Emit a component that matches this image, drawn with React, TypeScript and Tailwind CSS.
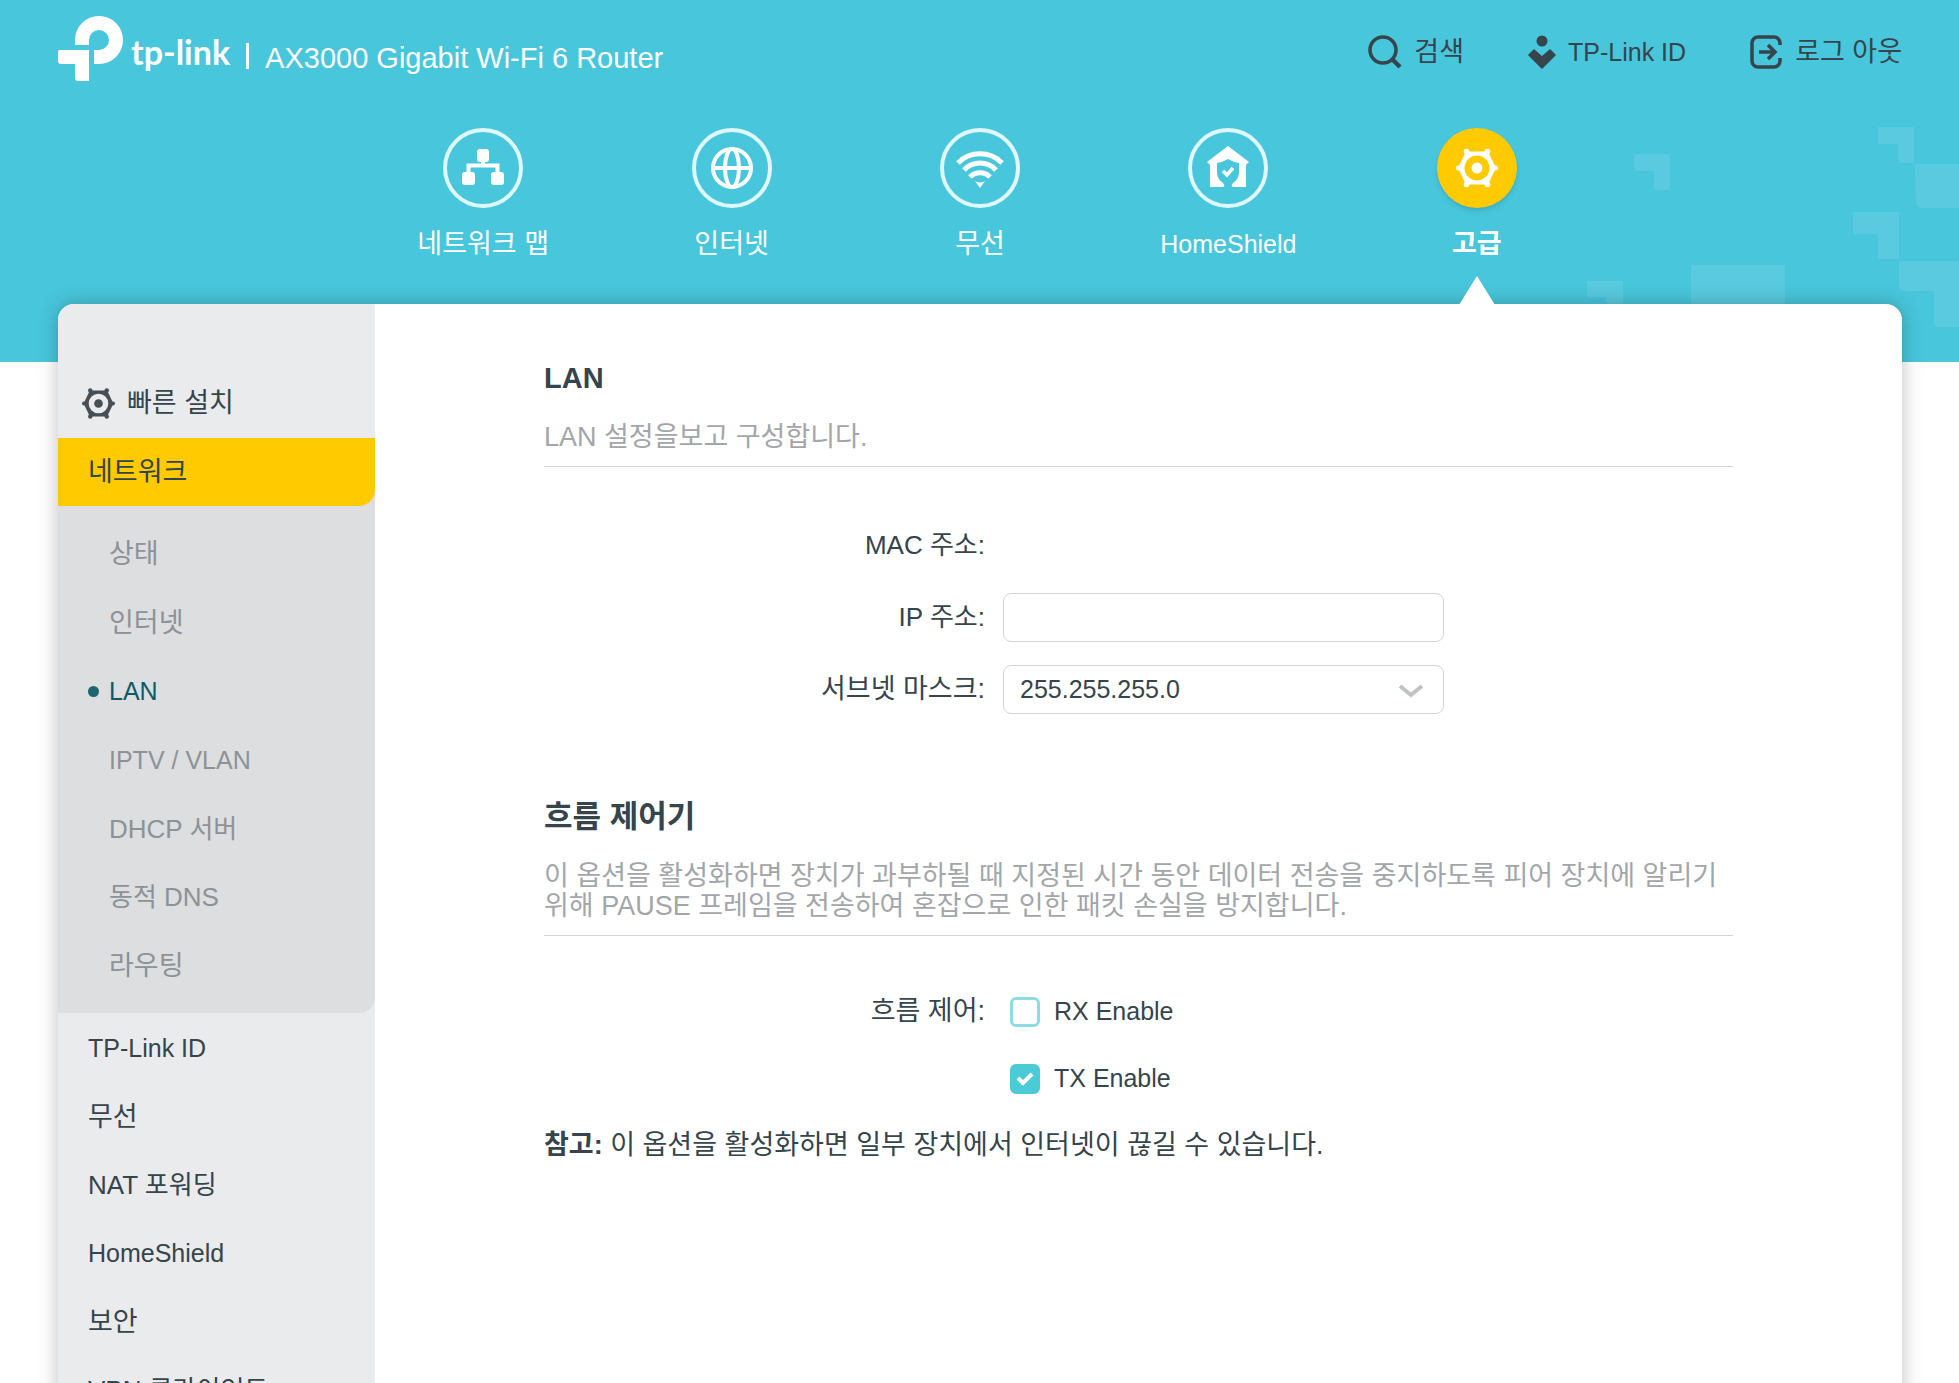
import { ReactNode } from 'react'
import clsx from 'clsx'

const Logo = () => (
  <svg width="65" height="65" viewBox="0 0 65 65" fill="#fff" aria-hidden="true">
    <path d="M17 29V24A24 24 0 1 1 41 48H36V34H41A10 10 0 1 0 31 24V29Z" />
    <path d="M2 34H31V65H20a3 3 0 0 1-3-3V48H3a3 3 0 0 1-3-3V36a2 2 0 0 1 2-2Z" />
  </svg>
)

const SearchIcon = () => (
  <svg width="34" height="34" viewBox="0 0 34 34" fill="none" stroke="#36444b" aria-hidden="true">
    <circle cx="15" cy="15" r="13" strokeWidth="3.5" />
    <path d="M24 24l8 8" strokeWidth="4.5" />
  </svg>
)

const PersonIcon = () => (
  <svg width="28" height="36" viewBox="0 0 28 36" fill="#36444b" aria-hidden="true">
    <circle cx="14" cy="7" r="5.5" />
    <path
      d="M6 16l8 7 8-7 5 5-13 13L1 21Z"
      stroke="#36444b"
      strokeWidth="1.5"
      strokeLinejoin="round"
    />
  </svg>
)

const LogoutIcon = () => (
  <svg width="33" height="34" viewBox="0 0 33 34" fill="none" stroke="#36444b" aria-hidden="true">
    <path
      d="M30 10V8a6 6 0 0 0-6-6H8a6 6 0 0 0-6 6v18a6 6 0 0 0 6 6h16a6 6 0 0 0 6-6v-3"
      strokeWidth="3.5"
    />
    <path d="M9 17h16M18 10l7 7-7 7" strokeWidth="3.5" />
  </svg>
)

const Gear = ({ size, color }: { size: number; color: string }) => (
  <svg width={size} height={size} viewBox="-21 -21 42 42" fill={color} aria-hidden="true">
    <path
      fillRule="evenodd"
      d="M-19 0L-11 -16.5H11L19 0L11 16.5H-11ZM-12.5 0a12.5 12.5 0 1 0 25 0a12.5 12.5 0 1 0-25 0Z"
    />
    <circle cx="-18.5" cy="0" r="2.5" />
    <circle cx="18.5" cy="0" r="2.5" />
    <circle cx="-10.5" cy="-16.5" r="2.8" />
    <circle cx="10.5" cy="-16.5" r="2.8" />
    <circle cx="-10.5" cy="16.5" r="2.8" />
    <circle cx="10.5" cy="16.5" r="2.8" />
    <circle cx="0" cy="0" r="5.5" />
  </svg>
)

const NavSvg = ({ children }: { children: ReactNode }) => (
  <svg width="52" height="52" viewBox="-26 -26 52 52" fill="none" stroke="none" aria-hidden="true">
    {children}
  </svg>
)

const NetworkIcon = () => (
  <NavSvg>
    <g fill="#fff">
      <rect x="-6" y="-19" width="12" height="13" rx="3" />
      <rect x="-21" y="4" width="13" height="13" rx="3" />
      <rect x="8" y="4" width="13" height="13" rx="3" />
    </g>
    <path d="M0-8V-2M-14.5 6V-2.5H14.5V6" stroke="#fff" strokeWidth="4" />
  </NavSvg>
)

const GlobeIcon = () => (
  <NavSvg>
    <g stroke="#fff" strokeWidth="4">
      <circle r="19" />
      <ellipse rx="7" ry="19" />
      <path d="M-19 0H19" />
    </g>
  </NavSvg>
)

const WifiIcon = () => (
  <NavSvg>
    <g stroke="#fff" strokeWidth="5">
      <path d="M-22-5A31 31 0 0 1 22-5" />
      <path d="M-16 2A22 22 0 0 1 16 2" />
      <path d="M-10 9A14 14 0 0 1 10 9" />
    </g>
    <path d="M-5 13Q0 16 5 13L0 20Z" fill="#fff" />
  </NavSvg>
)

const HomeIcon = () => (
  <NavSvg>
    <path
      fill="#fff"
      d="M0-22L21-6L18-3V19H4Q3 17 5 15Q11 11 11 4V-5Q5-6 0-9Q-5-6-11-5V4Q-11 11-5 15Q-3 17-4 19H-18V-3L-21-6Z"
    />
    <path d="M-5 3L-1 7L5 0" stroke="#fff" strokeWidth="3.5" />
  </NavSvg>
)

// Pixel blocks on the right side of the banner
const BannerPattern = () => (
  <svg
    className="absolute top-0 right-0"
    width="372"
    height="362"
    viewBox="0 0 372 362"
    fill="#59cadf"
    aria-hidden="true"
  >
    <path d="M47 154H83V190H69a2 2 0 0 1-2-2V171H49a2 2 0 0 1-2-2Z" />
    <path d="M291 127H327V163H313a2 2 0 0 1-2-2V144H293a2 2 0 0 1-2-2Z" />
    <path d="M328 164H372V208H335a6 6 0 0 1-6-6Z" />
    <path d="M266 212H312V259H293a2 2 0 0 1-2-2V234H268a2 2 0 0 1-2-2Z" />
    <path d="M312 261H372V327H351a4 4 0 0 1-4-4V291H317a5 5 0 0 1-5-5Z" />
    <path d="M104 265H198V330H104Z" />
    <path d="M0 281H36V317H19V297H2a2 2 0 0 1-2-2Z" />
  </svg>
)

const tools = [
  { label: '검색', icon: <SearchIcon />, size: 'text-[27px]' },
  { label: 'TP-Link ID', icon: <PersonIcon />, size: 'text-[25px]' },
  { label: '로그 아웃', icon: <LogoutIcon />, size: 'text-[27px]' },
]

const tabs = [
  { label: '네트워크 맵', icon: <NetworkIcon />, size: 'text-[27px]' },
  { label: '인터넷', icon: <GlobeIcon />, size: 'text-[27px]' },
  { label: '무선', icon: <WifiIcon />, size: 'text-[27px]' },
  { label: 'HomeShield', icon: <HomeIcon />, size: 'text-[25px]' },
  { label: '고급', icon: <Gear size={42} color="#fff" />, size: 'text-[27px]', active: true },
]

const networkItems = [
  { label: '상태', size: 'text-[27px]' },
  { label: '인터넷', size: 'text-[27px]' },
  { label: 'LAN', size: 'text-[25px]', active: true },
  { label: 'IPTV / VLAN', size: 'text-[25px]' },
  { label: 'DHCP 서버', size: 'text-[26px]' },
  { label: '동적 DNS', size: 'text-[26px]' },
  { label: '라우팅', size: 'text-[27px]' },
]

const menuItems = [
  { label: 'TP-Link ID', size: 'text-[25px]' },
  { label: '무선', size: 'text-[27px]' },
  { label: 'NAT 포워딩', size: 'text-[26px]' },
  { label: 'HomeShield', size: 'text-[25px]' },
  { label: '보안', size: 'text-[27px]' },
  { label: 'VPN 클라이언트', size: 'text-[26px]' },
]

const Header = () => (
  <div className="flex items-start justify-between">
    <div className="flex items-start">
      <div className="pt-4">
        <Logo />
      </div>
      <span className="ml-2 pt-8 font-['Lato',sans-serif] text-[34px] leading-10 font-bold text-white">
        tp-link
      </span>
      <span className="ml-4 mt-[43px] h-[26px] w-[3px] bg-white" />
      <h1 className="ml-4 pt-10 text-[29px] leading-9 text-white">
        AX3000 Gigabit Wi-Fi 6 Router
      </h1>
    </div>
    <div className="flex gap-16 pt-8">
      {tools.map((tool) => (
        <a key={tool.label} href="#" className="flex h-10 items-center gap-3">
          {tool.icon}
          <span className={clsx('leading-10', tool.size)}>{tool.label}</span>
        </a>
      ))}
    </div>
  </div>
)

const Tabs = () => (
  <nav className="mx-auto grid w-full max-w-[1242px] grid-cols-5 text-white">
    {tabs.map((tab) => (
      <a key={tab.label} href="#" className="flex flex-col items-center">
        <span
          className={clsx(
            'flex size-20 items-center justify-center rounded-full',
            tab.active ? 'bg-[#ffcb00] shadow-md' : 'border-4 border-[#dff8fd]'
          )}
        >
          {tab.icon}
        </span>
        <span className={clsx('mt-4 leading-10', tab.size, tab.active && 'font-bold')}>
          {tab.label}
        </span>
        {tab.active && (
          <svg className="mt-3 block" width="36" height="29" viewBox="0 0 36 29" aria-hidden="true">
            <path d="M18 0L36 29H0Z" fill="#fff" />
          </svg>
        )}
      </a>
    ))}
  </nav>
)

const Sidebar = () => (
  <aside className="w-[317px] shrink-0 rounded-tl-2xl bg-[#e9ebed] pt-16">
    <a href="#" className="flex h-[70px] items-center gap-3 pl-6 text-[27px]">
      <Gear size={33} color="#454f55" />
      빠른 설치
    </a>
    <div className="rounded-br-2xl bg-[#dcdee0]">
      <a
        href="#"
        className="flex h-[68px] items-center rounded-br-2xl bg-[#ffcb00] pl-[30px] text-[27px]"
      >
        네트워크
      </a>
      <ul className="grid h-[507px] auto-rows-fr pt-[14px] pb-3">
        {networkItems.map((item) => (
          <li key={item.label} className="flex items-center">
            <a
              href="#"
              className={clsx(
                'flex items-center',
                item.size,
                item.active ? 'pl-[30px] text-[#0f5a63]' : 'pl-[51px] text-[#8d9296]'
              )}
            >
              {item.active && <span className="mr-[10px] size-[11px] rounded-full bg-[#1c666e]" />}
              {item.label}
            </a>
          </li>
        ))}
      </ul>
    </div>
    <ul className="grid h-[412px] auto-rows-fr pt-px">
      {menuItems.map((item) => (
        <li key={item.label} className="flex items-center">
          <a href="#" className={clsx('pl-[30px]', item.size)}>
            {item.label}
          </a>
        </li>
      ))}
    </ul>
  </aside>
)

const Checkbox = ({ label, checked }: { label: string; checked?: boolean }) => (
  <label className="flex h-[67px] items-center text-[25px]">
    <span className="relative mr-[14px] size-[30px]">
      <input
        type="checkbox"
        defaultChecked={checked}
        className="peer block size-[30px] appearance-none rounded-md border-3 border-[#8fdbe2] bg-white checked:border-[#4acbd6] checked:bg-[#4acbd6]"
      />
      <svg
        className="pointer-events-none absolute inset-0 hidden peer-checked:block"
        width="30"
        height="30"
        viewBox="0 0 30 30"
        fill="none"
        aria-hidden="true"
      >
        <path d="M8 14l5 5 9-9" stroke="#fff" strokeWidth="4" />
      </svg>
    </span>
    {label}
  </label>
)

const App = () => {
  return (
    <div className="relative h-screen overflow-hidden bg-white font-['Liberation_Sans','Noto_Sans_CJK_KR',sans-serif] text-[#36444b]">
      <div className="absolute inset-x-0 top-0 h-[362px] bg-[#48c6dc]">
        <BannerPattern />
      </div>
      <div className="relative px-[58px] pr-[57px]">
        <div className="h-32">
          <Header />
        </div>
        <div className="relative z-10 h-44">
          <Tabs />
        </div>
        <div className="flex min-h-screen rounded-t-2xl bg-white shadow-[0_0_20px_rgba(0,0,0,0.25)]">
          <Sidebar />
          <main className="min-w-0 flex-1 px-[169px] pt-[54px]">
            <section>
              <h2 className="text-[29px] leading-10 font-bold">LAN</h2>
              <p className="mt-6 border-b border-[#d2d4d6] pb-[14px] text-[27px] leading-[30px] text-[#a3a6a9]">
                LAN 설정을보고 구성합니다.
              </p>
              <div className="grid grid-cols-[441px_441px] items-center gap-x-[18px] gap-y-[23px] pt-[54px]">
                <span className="text-right text-[26px] leading-[49px]">MAC 주소:</span>
                <span />
                <label htmlFor="ip" className="text-right text-[26px] leading-[49px]">
                  IP 주소:
                </label>
                <input
                  id="ip"
                  type="text"
                  className="h-[49px] w-full rounded-lg border border-[#d2d4d6] px-4 text-[25px]"
                />
                <label htmlFor="mask" className="text-right text-[27px] leading-[49px]">
                  서브넷 마스크:
                </label>
                <div className="relative">
                  <select
                    id="mask"
                    className="block h-[49px] w-full appearance-none rounded-lg border border-[#d2d4d6] bg-white px-4 text-[25px]"
                  >
                    <option>255.255.255.0</option>
                  </select>
                  <svg
                    className="pointer-events-none absolute top-[18px] right-5"
                    width="26"
                    height="16"
                    viewBox="0 0 26 16"
                    fill="none"
                    aria-hidden="true"
                  >
                    <path d="M2 3l11 9 11-9" stroke="#bfc3c6" strokeWidth="4" />
                  </svg>
                </div>
              </div>
            </section>
            <section className="mt-[83px]">
              <h2 className="text-[31px] leading-10 font-bold">흐름 제어기</h2>
              <p className="mt-6 border-b border-[#d2d4d6] pb-[14px] text-[27px] leading-[30px] text-[#a3a6a9]">
                이 옵션을 활성화하면 장치가 과부하될 때 지정된 시간 동안 데이터 전송을 중지하도록 피어
                장치에 알리기 위해 PAUSE 프레임을 전송하여 혼잡으로 인한 패킷 손실을 방지합니다.
              </p>
              <div className="grid grid-cols-[441px_441px] gap-x-[25px] pt-[42px]">
                <span className="text-right text-[27px] leading-[67px]">흐름 제어:</span>
                <div>
                  <Checkbox label="RX Enable" />
                  <Checkbox label="TX Enable" checked />
                </div>
              </div>
              <p className="mt-[13px] text-[27px] leading-10">
                <b>참고:</b> 이 옵션을 활성화하면 일부 장치에서 인터넷이 끊길 수 있습니다.
              </p>
            </section>
          </main>
        </div>
      </div>
    </div>
  )
}

export default App
